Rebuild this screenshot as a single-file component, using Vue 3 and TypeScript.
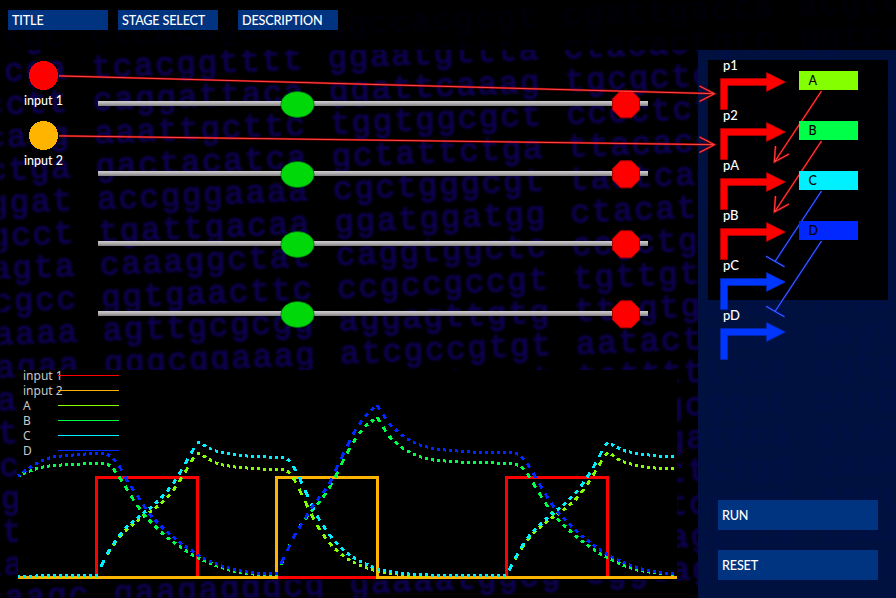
<script setup lang="ts">
type Point = [number, number]

interface Series {
  name: string
  color: string
  points: Point[]
}

const menu: string[] = ['TITLE', 'STAGE SELECT', 'DESCRIPTION']
const actions: string[] = ['RUN', 'RESET']

const inputs = [
  { name: 'input 1', color: '#ff0000', y: 75.5, tipY: 93.7 },
  { name: 'input 2', color: '#ffb400', y: 135.5, tipY: 144.7 },
]
const tracks: number[] = [104, 174, 244, 314]

const promoters = ['p1', 'p2', 'pA', 'pB', 'pC', 'pD'].map((name, i) => ({
  name,
  y: 50 * i,
  fill: i < 4 ? '#ff0000' : '#0037ff',
  edge: i < 4 ? '#b80000' : '#0028b8',
}))

const genes = [
  { name: 'A', color: '#84ff00', activates: true },
  { name: 'B', color: '#00ff48', activates: true },
  { name: 'C', color: '#00f0ff', activates: false },
  { name: 'D', color: '#0028ff', activates: false },
]

/* Backdrop sequence: rows of ten-letter blocks on a slightly tilted sheet. */
const sequence: string[][] = [
  ['acgtaagtgc', 'ctcacagaac', 'ggccacgcgt', 'cgattgacca', 'acgtcaggca'],
  ['gatacgtcga', 'tcacggtttt', 'ggaatgttta', 'ctacactgtc', 'ggtcatcaag'],
  ['ttgacacctt', 'caggattaca', 'ggattcaaag', 'tgcgctcgtc', 'atgcgtaagc'],
  ['gcatggcaag', 'aaattgcttc', 'tggtggcgct', 'cccctctagt', 'gctatcaggt'],
  ['tagcaactga', 'gactacatca', 'gctattctga', 'ttacaccagt', 'tcgagtctaa'],
  ['ccatagggat', 'accgggaaaa', 'cgctgggcgt', 'tactcacggt', 'ggcatagcta'],
  ['aactaggcct', 'tgattgacaa', 'ggatggatgg', 'ctacattgac', 'taagcgtaca'],
  ['tagcacagta', 'caaaggctat', 'caggtggctc', 'ccgctgaact', 'cgttacgatg'],
  ['gttacccgcc', 'ggtgaacttc', 'ccgccgccgt', 'tgttgtgacg', 'agactggaca'],
  ['tagcaaaaaa', 'agttgcgcgg', 'aggagttgtg', 'ttagtgtcac', 'tcacagatgt'],
  ['cgtgagagaa', 'gggcggaaag', 'atcgccgtgt', 'aatacttcac', 'gagtatcgta'],
  ['gcacataagt', 'cagtacggtc', 'gatcgtacct', 'tattttttca', 'agtgacatgc'],
  ['tagcattgat', 'tgcaatcgga', 'ctagctaagg', 'gctagcggat', 'ccagtcaagt'],
  ['actcagctca', 'gatcaggcta', 'tacgatcgta', 'atcagataca', 'gtacgatgca'],
  ['cgataaggct', 'cagtagctaa', 'gatcggatca', 'tcagttctgg', 'caaagaagaa'],
  ['tagcagttaa', 'tcgatcgacg', 'cagtacgtac', 'ggcatcgaga', 'agagtgtaca'],
  ['ccatgaatgt', 'gatcgatcga', 'tacagtcaga', 'gatcaggata', 'tcaagtgcta'],
  ['gatcacaagc', 'gaagagggcg', 'gaaaatggcg', 'cggtaggaga', 'gaagtcagta'],
]
const letters = sequence.flatMap((row, r) =>
  row.map((text, c) => ({
    text,
    x: -145.5 + 236 * c + 1.38 * r,
    y: 87.5 - 33 - 9.7 * c + 32.85 * r,
  })),
)

const series: Series[] = [
  {
    name: 'A',
    color: '#84ff00',
    points: [
      [18, 576.5], [98, 576], [102, 564], [108, 553], [114, 544], [120, 536], [126, 530], [132, 525], [138, 520.5],
      [144, 516], [151, 511.5], [157, 507], [163, 501.5], [169, 495.5], [175, 488], [181, 479], [187, 469],
      [193, 458.5], [198, 452], [205, 457], [211, 460.5], [217, 463.5], [223, 465], [235, 467], [247, 468],
      [259, 469], [283, 469.5], [289, 472], [295, 480.5], [301, 493], [307, 505], [312, 516], [318, 527],
      [324, 536], [330, 544], [336, 550], [342, 555], [348, 559.5], [355, 563], [361, 566], [367, 568],
      [373, 570], [385, 572.5], [397, 574], [409, 575.5], [507, 576], [510, 568], [517, 556], [523, 546],
      [529, 538], [535, 531], [541, 526.5], [547, 521.5], [553, 517], [559, 513.5], [565, 509], [571, 504],
      [577, 498], [583, 490.5], [589, 482], [595, 472], [601, 462], [607, 452], [613, 455.5], [619, 460],
      [625, 462.5], [637, 465.5], [649, 467.5], [661, 468.5], [678, 468.5],
    ],
  },
  {
    name: 'B',
    color: '#00ff48',
    points: [
      [18, 476], [24, 473.5], [31, 470.5], [37, 468.5], [43, 467], [49, 466], [61, 465], [79, 464], [91, 463.5],
      [103, 463.5], [109, 464.8], [114, 469.5], [120, 478], [126, 487.5], [132, 497.5], [138, 506.5], [144, 515],
      [151, 522], [157, 528], [163, 534], [169, 539], [175, 543], [181, 547.5], [187, 551.5], [193, 555.5],
      [199, 558.5], [205, 561], [211, 563.5], [217, 566], [223, 568], [229, 570], [235, 571.5], [241, 572.5],
      [253, 574], [271, 575], [278, 574.5], [282, 562], [288, 549], [294, 536.5], [300, 526], [306, 518],
      [312, 510.5], [318, 503.5], [324, 496], [330, 487], [336, 475.5], [342, 463], [348, 451.5], [354, 441],
      [360, 432.5], [366, 425.5], [372, 421], [377, 417], [384, 428.5], [390, 437.5], [397, 443.5], [403, 448.5],
      [409, 452], [415, 455], [421, 457], [427, 458.5], [433, 460], [445, 461], [457, 462], [493, 462.8],
      [511, 463.5], [517, 464.5], [522, 467.5], [528, 474.5], [534, 484.5], [540, 494.5], [546, 504], [552, 513],
      [558, 520], [565, 526], [571, 532], [577, 537], [583, 542], [589, 546], [595, 550.5], [601, 554.5],
      [607, 557.5], [613, 560.5], [619, 563.5], [625, 566], [631, 568], [637, 570], [649, 572], [661, 573.5],
      [678, 574.5],
    ],
  },
  {
    name: 'C',
    color: '#00f0ff',
    points: [
      [18, 576.5], [37, 576], [43, 575.5], [98, 575.3], [102, 564], [108, 552], [114, 543], [120, 535],
      [126, 527.5], [132, 522.5], [138, 517.5], [144, 512.5], [151, 507.5], [157, 502], [163, 496], [169, 489],
      [175, 481], [181, 471], [187, 460.5], [193, 450], [198, 441], [205, 446], [211, 449], [217, 451.5],
      [223, 452.5], [235, 454.7], [247, 456], [265, 457], [283, 457.5], [289, 460], [295, 469], [301, 481],
      [307, 494.5], [312, 506], [318, 517.5], [324, 527], [330, 535.5], [336, 543], [342, 548.5], [348, 554],
      [355, 558.5], [361, 562], [367, 564.5], [373, 567], [379, 569.5], [385, 570.8], [397, 572.7], [409, 574],
      [427, 575], [450, 575.5], [507, 575.5], [510, 568], [517, 555], [523, 544.5], [529, 536], [535, 529],
      [541, 524], [547, 518], [553, 513], [559, 508.5], [565, 503.5], [571, 498], [577, 491.5], [583, 483.5],
      [589, 474.5], [595, 464.5], [601, 453], [607, 442], [613, 445], [619, 448.5], [625, 451], [637, 453.5],
      [649, 455], [661, 456.5], [678, 457],
    ],
  },
  {
    name: 'D',
    color: '#0028ff',
    points: [
      [18, 476], [24, 471.5], [31, 467], [37, 463], [43, 460], [49, 458], [55, 456.5], [67, 455.5], [79, 454.5],
      [91, 453.5], [103, 453.3], [109, 455], [115, 460], [121, 468.5], [126, 479], [133, 489], [139, 498.5],
      [145, 507.5], [150, 515], [157, 522], [163, 528], [169, 533.5], [175, 538.5], [181, 543.5], [187, 547.5],
      [193, 551.5], [199, 556], [205, 559], [211, 562], [217, 564], [223, 566.5], [229, 568], [235, 570],
      [241, 571], [253, 573], [265, 573.5], [278, 573.8], [282, 561], [289, 547], [295, 534.5], [301, 525],
      [307, 515.5], [312, 507], [318, 499], [325, 490.5], [331, 481], [336, 469], [342, 457], [348, 444],
      [354, 432.5], [360, 423], [366, 415.5], [372, 409], [377, 405], [384, 416], [390, 424.5], [397, 431],
      [403, 436], [409, 440], [415, 443], [421, 445.5], [427, 447], [433, 448.5], [439, 449.5], [457, 451],
      [475, 452.3], [511, 452.5], [517, 453.5], [522, 457], [528, 464.5], [534, 474.5], [540, 485], [546, 495],
      [552, 504.5], [558, 512.5], [565, 519.5], [571, 526], [577, 531.5], [583, 537], [589, 541.5], [595, 546],
      [601, 550.5], [607, 554.5], [613, 557.5], [619, 560.5], [625, 563], [631, 565.5], [637, 567.5],
      [643, 569.5], [649, 570.5], [655, 571.8], [661, 572.8], [678, 573.7],
    ],
  },
]

const legend = [...inputs, ...series].map((s, i) => ({ name: s.name, color: s.color, y: 375.5 + 15 * i }))

function valueAt(points: Point[], x: number): number {
  const i = Math.min(points.length - 1, Math.max(1, points.findIndex((p) => p[0] >= x)))
  const [x0, y0] = points[i - 1]
  const [x1, y1] = points[i]
  return y0 + ((y1 - y0) * (x - x0)) / (x1 - x0)
}

/* Three pixels on, three off, measured along the time axis. */
function dots(points: Point[]): string {
  let d = ''
  for (let x = 17; x < 676; x += 6) {
    const from = Math.max(18, x)
    const to = Math.min(677, x + 3)
    d += `M${from} ${valueAt(points, from).toFixed(1)}L${to} ${valueAt(points, to).toFixed(1)}`
  }
  return d
}
const curves = series.map((s) => ({ name: s.name, color: s.color, d: dots(s.points) }))
</script>

<template>
  <div class="app">
    <svg class="backdrop" width="896" height="598" viewBox="0 0 896 598">
      <text
        v-for="(l, i) in letters"
        :key="i"
        class="dna"
        :transform="`translate(${l.x} ${l.y}) rotate(-2.4)`"
      >{{ l.text }}</text>
    </svg>

    <nav class="menu">
      <button v-for="m in menu" :key="m" class="btn" type="button">{{ m }}</button>
    </nav>
    <div class="body">
      <main class="workspace">
        <div class="plot-area"></div>
      </main>
      <aside class="side">
        <div class="network"></div>
        <div class="actions">
          <button v-for="a in actions" :key="a" class="btn" type="button">{{ a }}</button>
        </div>
      </aside>
    </div>

    <svg class="diagram" width="896" height="598" viewBox="0 0 896 598">
      <defs>
        <linearGradient id="rail" x1="0" y1="0" x2="0" y2="1">
          <stop offset="0" stop-color="#cfcfcf" />
          <stop offset="0.5" stop-color="#b0acb0" />
          <stop offset="1" stop-color="#808080" />
        </linearGradient>
      </defs>

      <g v-for="y in tracks" :key="y">
        <rect x="98" :y="y - 3" width="550" height="5" fill="url(#rail)" />
        <ellipse cx="297.5" :cy="y + 0.5" rx="16.7" ry="13" fill="#00d80a" stroke="#006a10" stroke-width="0.7" />
        <path
          :transform="`translate(626 ${y + 0.3})`"
          d="M-5.5 -13.5H5.5L13.5 -5.5V5.5L5.5 13.5H-5.5L-13.5 5.5V-5.5Z"
          fill="#ff0000"
          stroke="#b00000"
        />
      </g>

      <g v-for="n in inputs" :key="n.name">
        <circle cx="43.5" :cy="n.y" r="14.5" :fill="n.color" shape-rendering="crispEdges" />
        <text class="label" x="24" :y="n.y + 29.5">{{ n.name }}</text>
        <g class="wire on">
          <path class="halo" :d="`M59 ${n.y + 0.4}L714 ${n.tipY}M699.5 ${n.tipY - 7.7}L714.5 ${n.tipY}L699.5 ${n.tipY + 7.7}`" />
          <path :d="`M59 ${n.y + 0.4}L714 ${n.tipY}M699.5 ${n.tipY - 7.7}L714.5 ${n.tipY}L699.5 ${n.tipY + 7.7}`" />
        </g>
      </g>

      <g v-for="p in promoters" :key="p.name" :transform="`translate(0 ${p.y})`">
        <path
          d="M720.5 109.5V78.5H766.5V72.5L785.5 82L766.5 91.5V85.5H727.5V109.5Z"
          :fill="p.fill"
          :stroke="p.edge"
          stroke-opacity="0.7"
        />
        <text class="label tag" x="723" y="70">{{ p.name }}</text>
      </g>

      <g v-for="(g, i) in genes" :key="g.name" :transform="`translate(0 ${50 * i})`">
        <g :class="['wire', g.activates ? 'on' : 'off']">
          <template v-if="g.activates">
            <path class="halo" d="M821.5 91L774.5 162M775.5 146L774.3 162L789 154" />
            <path d="M821.5 91L774.5 162M775.5 146L774.3 162L789 154" />
          </template>
          <template v-else>
            <path class="halo" d="M821.5 91L775 161.5M766 156.3L784.5 166.8" />
            <path d="M821.5 91L775 161.5M766 156.3L784.5 166.8" />
          </template>
        </g>
      </g>
      <g v-for="(g, i) in genes" :key="g.name" :transform="`translate(0 ${50 * i})`">
        <rect x="799" y="71" width="59" height="19" :fill="g.color" />
        <text class="label gene" x="808.5" y="85">{{ g.name }}</text>
      </g>

      <g v-for="l in legend" :key="l.name">
        <text class="legend" x="23" :y="l.y + 4.5">{{ l.name }}</text>
        <path :d="`M58 ${l.y}H119`" :stroke="l.color" />
      </g>

      <g class="steps">
        <path stroke="#ff0000" d="M18 577.5H96.5V477.5H197.5V577.5H506.5V477.5H607.5V577.5H677" />
        <path stroke="#ffb400" d="M18 577.5H276.5V477.5H377.5V577.5H677" />
      </g>
      <path
        v-for="c in curves"
        :key="c.name"
        class="curve"
        :d="c.d"
        :stroke="c.color"
      />
    </svg>
  </div>
</template>

<style>
body {
  background: #000;
}
</style>

<style scoped>
.app {
  position: relative;
  display: flex;
  flex-direction: column;
  width: 896px;
  height: 598px;
  overflow: hidden;
  background: #000;
  font-family: Lato, sans-serif;
}

.backdrop,
.diagram {
  position: absolute;
  top: 0;
  left: 0;
}

.diagram {
  pointer-events: none;
}

.dna {
  fill: #0e0050;
  stroke: #0e0050;
  stroke-width: 1.2px;
  font-family: "Liberation Mono", monospace;
  font-size: 32.5px;
  letter-spacing: 1.75px;
  white-space: pre;
}

.backdrop {
  filter: blur(1.3px);
}

.menu {
  position: relative;
  display: flex;
  align-items: flex-start;
  gap: 10px;
  box-sizing: border-box;
  height: 50px;
  padding: 10px 8px;
  background: rgba(0, 0, 0, 0.87);
}

.menu .btn {
  width: 100px;
  height: 20px;
  padding-left: 4px;
}

.menu .btn:last-child {
  margin-left: 10px;
}

.btn {
  display: flex;
  align-items: center;
  box-sizing: border-box;
  margin: 0;
  padding: 2px 4px 0;
  border: 0;
  background: #003380;
  color: #fff;
  font-family: inherit;
  font-size: 12.6px;
  font-weight: 500;
  letter-spacing: -0.15px;
  line-height: 1;
  white-space: nowrap;
}

.body {
  position: relative;
  display: flex;
  flex: 1;
}

.workspace {
  box-sizing: border-box;
  width: 698px;
  padding: 320px 21px 18px 18px;
}

.plot-area {
  height: 210px;
  background: #000;
}

.side {
  display: flex;
  flex-direction: column;
  justify-content: space-between;
  box-sizing: border-box;
  width: 198px;
  padding: 10px 8px 18px 10px;
  background: rgba(0, 17, 68, 0.92);
}

.network {
  height: 240px;
  background: #000003;
}

.actions {
  display: flex;
  flex-direction: column;
  gap: 20px;
  padding: 0 10px;
}

.actions .btn {
  height: 30px;
  padding-top: 3px;
}

.label {
  fill: #fff;
  font-size: 12.5px;
  font-weight: 500;
}

.tag {
  font-size: 13px;
}

.gene {
  fill: #000;
}

.legend {
  fill: #c8c8c8;
  font-family: "Noto Sans", sans-serif;
  font-size: 12px;
}

.wire path {
  fill: none;
  stroke-width: 1;
}

.wire .halo {
  stroke-width: 2.2;
}

.on path {
  stroke: #ff4848;
}

.on .halo {
  stroke: rgba(210, 0, 0, 0.75);
}

.off path {
  stroke: #4468ff;
}

.off .halo {
  stroke: rgba(0, 30, 200, 0.75);
}

.steps path {
  fill: none;
  stroke-width: 3;
  shape-rendering: crispEdges;
}

.curve {
  fill: none;
  stroke-width: 3;
  shape-rendering: crispEdges;
}
</style>
